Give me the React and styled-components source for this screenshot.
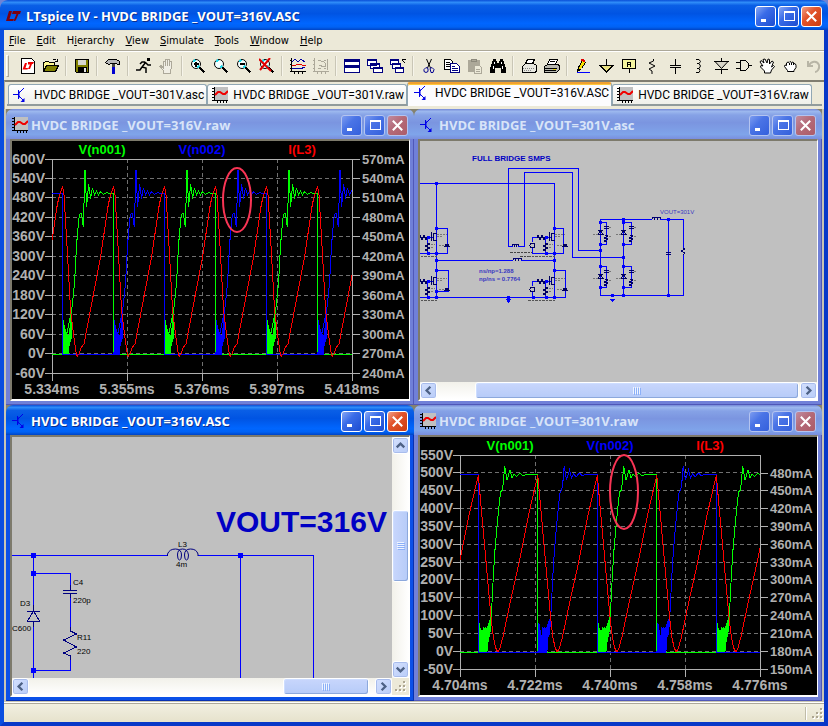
import React from "react";
import styled, { createGlobalStyle, css } from "styled-components";

const GlobalStyle = createGlobalStyle`
  * { box-sizing: border-box; }
  html, body { margin: 0; height: 100%; }
  body { background: #6d83d6; font-family: "DejaVu Sans Condensed", "Noto Sans", sans-serif; }
  #root { height: 100%; }
  button { margin: 0; padding: 0; border: 0; background: none; font: inherit; color: inherit; }
`;

const activeBar = "linear-gradient(#0a4fd8 0%, #2f8cf8 8%, #0a5fe6 18%, #0054e3 45%, #0066ff 78%, #0062f4 90%, #0044c4 100%)";
const inactiveBar = "linear-gradient(#7488d8 0%, #9cb8ee 8%, #86a2e6 20%, #7b95e0 45%, #7fa4ea 85%, #7a8ede 100%)";

const Frame = styled.div`
  display: flex;
  flex-direction: column;
  width: 100%;
  height: 100vh;
  min-height: 480px;
  border-radius: 8px 8px 0 0;
  overflow: hidden;
`;

const FrameBody = styled.div`
  display: flex;
  flex: 1;
  flex-direction: column;
  min-height: 0;
  background: #ece9d8;
  border: solid;
  border-width: 0 4px 4px;
  border-color: #0a4ee0 #0838c8 #0838c8 #0a4ee0;
`;

const TitleBar = styled.header`
  display: flex;
  align-items: center;
  flex: none;
  height: 30px;
  gap: ${(p) => (p.$main ? 5 : 3)}px;
  padding: 2px 6px 0;
  background: ${(p) => (p.$active ? activeBar : inactiveBar)};
  border-radius: 7px 7px 0 0;
`;

const TitleText = styled.h2`
  flex: 1;
  min-width: 0;
  margin: 0;
  overflow: hidden;
  white-space: nowrap;
  font: bold 13px/20px "Open Sans", "Noto Sans", sans-serif;
  color: ${(p) => (p.$active ? "#fff" : "#d8e4f8")};
  text-shadow: ${(p) => (p.$active ? "1px 1px 0 #0a3090" : "none")};
`;

const Controls = styled.div`
  display: flex;
  gap: 2px;
`;

const ControlButton = styled.button`
  display: grid;
  place-items: center;
  width: 21px;
  height: 21px;
  border: 1px solid ${(p) => (p.$active ? "#fff" : "#b4c4f0")};
  border-radius: 3px;
  background: ${(p) =>
    p.$close
      ? p.$active
        ? "linear-gradient(135deg, #f0a088, #e2542c 40%, #cc3c10)"
        : "linear-gradient(135deg, #c08ca0, #b46a78 45%, #ac5c68)"
      : p.$active
        ? "linear-gradient(135deg, #88a8f4, #3a6ce8 40%, #1c4cd0)"
        : "linear-gradient(135deg, #7c9cf0, #4a74e6 40%, #3460dc)"};
`;

const Menu = styled.nav`
  display: flex;
  flex: none;
  align-items: center;
  height: 20px;
  padding: 2px 0 0 5px;
  gap: 11px;
  font-size: 11px;
  line-height: 16px;
  color: #000;
`;

const Toolbar = styled.div`
  display: flex;
  flex: none;
  align-items: center;
  height: 30px;
  overflow: hidden;
  border-top: 1px solid #aca899;
  box-shadow: inset 0 1px 0 #fff;
`;

const Grip = styled.span`
  flex: none;
  width: 3px;
  height: 22px;
  margin: 0 7px 0 2px;
  border: 1px solid #aca899;
  border-color: #fff #aca899 #aca899 #fff;
`;

const ToolButton = styled.button`
  display: grid;
  place-items: center;
  flex: none;
  width: 23px;
  height: 22px;
`;

const Divider = styled.span`
  flex: none;
  width: 2px;
  height: 20px;
  margin: 0 3px;
  background: #c9c6b6;
  border-right: 1px solid #f6f4ea;
`;

const TabStrip = styled.div`
  display: flex;
  flex: none;
  align-items: flex-end;
  height: 29px;
  padding: 0 2px 3px;
  border-top: 2px solid #807d70;
  border-left: 1px solid #aca899;
`;

const TabRow = styled.div`
  display: flex;
  flex: 1;
  min-width: 0;
  align-items: flex-end;
  height: 24px;
  border-bottom: 2px solid #919b9c;
  padding-left: 1px;
`;

const Tab = styled.button`
  display: flex;
  align-items: center;
  gap: 5px;
  height: ${(p) => (p.$active ? 24 : 20)}px;
  padding: ${(p) => (p.$active ? "0 2px 4px 6px" : "0 2px 0 4px")};
  margin-bottom: ${(p) => (p.$active ? -2 : 0)}px;
  white-space: nowrap;
  font: 12px/16px Roboto, "DejaVu Sans Condensed", sans-serif;
  color: #000;
  border: 1px solid #91a7b4;
  border-bottom: 0;
  border-radius: 3px 3px 0 0;
  background: linear-gradient(#fff, #f0f0ea);
  svg { flex: none; }
  ${(p) =>
    p.$active &&
    css`
      background: #fcfcfe;
      border-top: 2px solid #f0a030;
      box-shadow: inset 0 1px 0 #ffc83c;
    `}
`;

const Workspace = styled.main`
  display: grid;
  flex: 1;
  min-height: 0;
  grid-template: 1fr 1fr / 1fr 1fr;
  background: #84826f;
  border: solid #c8c5b4;
  border-width: 0 2px 1px;
`;

const Child = styled.section`
  display: flex;
  flex-direction: column;
  min-width: 0;
  min-height: 0;
`;

const ChildBody = styled.div`
  display: flex;
  flex: 1;
  flex-direction: column;
  min-height: 0;
  padding: 0 4px 4px;
  background: ${(p) => (p.$active ? "#0a50e8" : "#7080d8")};
  box-shadow: inset -1px -1px 0 ${(p) => (p.$active ? "#0830b0" : "#5058b8")};
`;

const Client = styled.div`
  display: grid;
  flex: 1;
  min-height: 0;
  grid-template: ${(p) => (p.$vertical ? "minmax(0, 1fr) auto / minmax(0, 1fr) auto" : "minmax(0, 1fr) auto / minmax(0, 1fr)")};
  border: solid;
  border-width: 2px 1px 2px 2px;
  border-color: #7d7a6c #fff #fff #7d7a6c;
  background: ${(p) => p.$fill};
`;

const Sheet = styled.div`
  overflow: hidden;
  min-width: 0;
  min-height: 0;
  background: #c0c0c0;
  svg { display: block; }
`;

const PlotSvg = styled.svg`
  display: block;
  width: 100%;
  height: 100%;
  min-height: 0;
`;

const Track = styled.div`
  display: flex;
  flex-direction: ${(p) => (p.$vertical ? "column" : "row")};
  background: linear-gradient(${(p) => (p.$vertical ? "90deg" : "180deg")}, #f2f1ea, #fff);
`;

const ScrollButton = styled.button`
  display: grid;
  place-items: center;
  flex: none;
  width: 17px;
  height: 17px;
  border: 1px solid #fff;
  border-radius: 3px;
  background: linear-gradient(135deg, #d4e0fe, #b8ccf8);
  box-shadow: inset 0 0 0 1px #a8bcec;
`;

const Spacer = styled.span`
  flex: ${(p) => p.$grow} 1 0;
`;

const Thumb = styled.span`
  display: grid;
  place-items: center;
  flex: ${(p) => p.$grow} 1 0;
  min-width: 17px;
  min-height: 17px;
  border: 1px solid #fff;
  border-radius: 3px;
  background: linear-gradient(${(p) => (p.$vertical ? "90deg" : "180deg")}, #c8d6fc, #b6cbf8);
  box-shadow: inset -1px -1px 0 #8ca8dc, inset 1px 1px 0 #cdddff;
`;

const StatusBar = styled.footer`
  display: flex;
  flex: none;
  align-items: center;
  justify-content: flex-end;
  gap: 5px;
  height: 20px;
  padding: 2px 0 0;
  border-top: 1px solid #fff;
  box-shadow: inset 0 1px 0 #aca899;
  background: linear-gradient(#f2f0e2, #e6e2cc);
`;

const StatusDivider = styled.span`
  width: 2px;
  height: 13px;
  border-left: 1px solid #c0bca8;
  border-right: 1px solid #fff;
`;

const CornerBox = styled.span`
  display: grid;
  place-items: end;
  padding: 2px;
  background: #ece9d8;
`;

/* ---------- icons ---------- */

const Svg16 = ({ children, size = 16, ...rest }) => (
  <svg width={size} height={size} viewBox="0 0 16 16" fill="none" stroke="#000" shapeRendering="crispEdges" aria-hidden="true" {...rest}>
    {children}
  </svg>
);

const Gripper = () => (
  <svg width="12" height="12" viewBox="0 0 12 12" aria-hidden="true" shapeRendering="crispEdges">
    <path d="M9 1h2v2h-2zM5 5h2v2h-2zM9 5h2v2h-2zM1 9h2v2h-2zM5 9h2v2h-2zM9 9h2v2h-2z" fill="#fff" />
    <path d="M8 0h2v2h-2zM4 4h2v2h-2zM8 4h2v2h-2zM0 8h2v2h-2zM4 8h2v2h-2zM8 8h2v2h-2z" fill="#aca590" />
  </svg>
);

const AppLogo = () => (
  <svg width="15" height="12" viewBox="0 0 15 12" fill="#7c0010" aria-hidden="true">
    <path d="M3 1h3L3.500 9H8l-1 2H0z" />
    <path d="M7 1h8l-1 3h-1.500l-2.500 6c-.5 1-1.500 1-2.500 1l3-7H6z" />
  </svg>
);

const SchematicIcon = () => (
  <Svg16 stroke="#0000e8" shapeRendering="auto">
    <path d="M0 7.500h5M5.500 3v9M6 6l5-5M6 9l5 5" />
    <path d="M6 4v7" />
    <path d="M11.500 11v4h-4z" fill="#0000e8" stroke="none" />
  </Svg16>
);

const WaveIcon = () => (
  <Svg16>
    <path d="M2 0h14v13H2z" fill="#c0c0c0" stroke="none" />
    <path d="M2.500 0v14M2 13.500h14M0 1.500h2M0 4.500h2M0 7.500h2M0 10.500h2M0 13.500h2M5.500 14v2M8.500 14v2M11.500 14v2M14.500 14v2" />
    <path d="M3 8l3-3 2 0 3 2 2 0 3-3" stroke="#f00000" strokeWidth="2" shapeRendering="auto" />
  </Svg16>
);

const Lens = ({ children }) => (
  <>
    <circle cx="6" cy="6" r="4.500" fill="#f4ffff" shapeRendering="auto" />
    <path d="M3 4l2-2M7 10l2-2" stroke="#20d8e8" strokeWidth="2" />
    <path d="M9.500 9.500l5 5" strokeWidth="2" />
    {children}
  </>
);

const hand = "M4 15v-3L1 8.500 2 7.500l2 2V3h2v5V1h2v7V1.500h2V8V3h2v8l-1 2v2z";

const icons = {
  new: (
    <>
      <path d="M1.500.5h10l3 3v12h-13z" fill="#fff" />
      <path d="M5 5h2L5.500 10H8l-.5 1.500H2.500zM8 4h6l-1 2h-1l-2 5H8l2-4.500H8z" fill="#f00000" stroke="none" shapeRendering="auto" />
    </>
  ),
  open: (
    <>
      <path d="M.5 13.500v-9h1l1-1h3l1 1h5v3" fill="#fff890" />
      <path d="M.5 13.500l3-6h12l-3 6z" fill="#808000" />
      <path d="M9.500 2.500q2-2 4 0M14.500.5v3h-3" />
    </>
  ),
  save: (
    <>
      <path d="M1.500 1.500h13v13h-12l-1-1z" fill="#808000" />
      <path d="M4 2h8v5H4z" fill="#d8d8d0" stroke="none" />
      <path d="M4 9h9v6H4z" fill="#000" stroke="none" />
      <path d="M10 10h2v4h-2z" fill="#e8e8e8" stroke="none" />
    </>
  ),
  hammer: (
    <>
      <path d="M.5 4.500l3-3h8l3 2v3h-2l-1-1h-5l-3 1z" fill="#b8b8b8" />
      <path d="M7 6h3v4H7z" fill="#444" stroke="none" />
      <path d="M7 9h3v7H7z" fill="#0000d0" stroke="none" />
    </>
  ),
  run: (
    <>
      <path d="M11 0h3v3h-3z" fill="#000" stroke="none" />
      <path d="M10 4L6 9M9 4H6L4 6M10 5l2 2h3" strokeWidth="1.500" shapeRendering="auto" />
      <path d="M6 9l4 1 0 5M6 9l-2 3H0" strokeWidth="1.500" shapeRendering="auto" />
    </>
  ),
  halt: <path d={hand} fill="#f0eee4" stroke="#aca899" />,
  zoomIn: <Lens><path d="M3.500 6h5M6 3.500v5" strokeWidth="1.500" /></Lens>,
  zoom: <Lens />,
  zoomOut: <Lens><path d="M3.500 6h5" strokeWidth="2" /></Lens>,
  zoomFit: <Lens><path d="M0 1l12 12M11 0L1 12" stroke="#e00000" strokeWidth="2" shapeRendering="auto" /></Lens>,
  autorange: (
    <>
      <path d="M1.500 0v14M0 13.500h16M0 2.500h2M0 6.500h2M0 10.500h2M4.500 13v3M8.500 13v3M12.500 13v3" />
      <path d="M2 4l3-3 3 3 3-3 4 3" stroke="#0000a0" />
      <path d="M2 7h4l3-1 3 1h4" stroke="#e00000" />
      <path d="M2 11l4-1 4 1 5-2" stroke="#0000a0" />
    </>
  ),
  setup: (
    <>
      <path d="M1.500 0v14M0 13.500h16M0 2.500h2M0 6.500h2M0 10.500h2M4.500 13v3M8.500 13v3M12.500 13v3" stroke="#aca899" />
      <path d="M5 2.500h3M11 2.500h2M5 10.500h3M11 10.500h2M8.500 4a3 3 0 0 1 4 4l-4 1V7H6M14.500 1v11" stroke="#aca899" />
    </>
  ),
  tile: (
    <>
      <path d="M.5 1.500h15v6H.5zM.5 8.500h15v6H.5z" fill="#fff" stroke="#000080" />
      <path d="M1 3h14M1 9h14" stroke="#000080" strokeWidth="2" />
    </>
  ),
  cascade: (
    <g fill="#fff" stroke="#000080">
      <path d="M.5 1.500h9v6h-9zM3.500 5.500h9v5h-9zM6.500 9.500h9v5h-9z" />
      <path d="M1 2h9M4 6h9M7 10h9" strokeWidth="2" />
    </g>
  ),
  closeAll: (
    <>
      <g fill="#fff" stroke="#000080">
        <path d="M.5 1.500h8v5h-8zM2.500 5.500h8v5h-8zM5.500 9.500h8v5h-8z" />
        <path d="M1 2h8M3 6h8M6 10h8" strokeWidth="2" />
      </g>
      <path d="M15 5l-3-3M12 1.500h3.500" />
    </>
  ),
  cut: (
    <g shapeRendering="auto">
      <path d="M5.500 1l4 9M10.500 1l-4 9" />
      <path d="M3 11.500l2-2 2 1v3l-2 1-2-1zM9 10.500l2-1 2 2-1 3h-2z" stroke="#000090" />
    </g>
  ),
  copy: (
    <>
      <path d="M.5 1.500h6l2 2v8h-8z" fill="#fff" />
      <path d="M2 4.500h4M2 6.500h5M2 8.500h5" />
      <path d="M6.500 5.500h6l3 3v6h-9z" fill="#fff" stroke="#000080" />
      <path d="M8 8.500h3M8 10.500h6M8 12.500h6" stroke="#000080" />
    </>
  ),
  paste: (
    <>
      <path d="M1 2h12v12H1z" fill="#aca899" stroke="none" />
      <path d="M4.500 1.500h5v2h-5z" stroke="#8c897c" />
      <path d="M7.500 7.500h5l2 2v6h-7z" fill="#ece9d8" stroke="#aca899" />
      <path d="M9 11.500h4M9 13.500h4" stroke="#aca899" />
    </>
  ),
  find: (
    <>
      <path d="M3 1h3l1 4h2l1-4h3l3 10v4h-5v-5H5v5H0v-4z" fill="#000" stroke="none" />
      <path d="M4.500 4v2M3.500 8v3M11.500 4v2M12.500 8v3" stroke="#fff" />
    </>
  ),
  preview: (
    <>
      <path d="M4.500 5.500l2-4h7l-2 4z" fill="#fff" />
      <path d="M1.500 8.500l3-3h8l3 2v6l-2 1h-12z" fill="#e8e8e0" />
      <path d="M2 10.500h11M3 12.500h8" stroke="#888" strokeDasharray="1 1" />
    </>
  ),
  print: (
    <>
      <path d="M3.500 6.500l2-5h8l-2 5z" fill="#fff" />
      <path d="M.5 8.500l3-2h10l2 1v4l-3 3H.5z" fill="#b8b8b0" />
      <path d="M1 10.500h12M1 12.500h11M6 3.500h5" />
      <path d="M9 11h3v1H9z" fill="#e0d000" stroke="none" />
    </>
  ),
  wire: (
    <>
      <path d="M2.500 13.500l1-4 4-7 3 2-4 6z" fill="#f8e000" />
      <path d="M6 1h3v1h1v2H8V3H6z" fill="#e00000" stroke="none" />
      <path d="M2 14.500h13" stroke="#0000ff" />
    </>
  ),
  ground: <path d="M8.500 1v6M1 7.500h15M2.500 8l6 6 6-6" fill="#e8e080" />,
  label: (
    <>
      <path d="M1.500 1.500h13v9h-13z" fill="#f4f4a0" />
      <path d="M6.500 9V4.500h3V9M6 6.500h4M8.500 11v4" />
    </>
  ),
  resistor: <path d="M9.500 1v2L5 5l6 3-6 3 3 2v3" shapeRendering="auto" />,
  capacitor: <path d="M3 7.500h11M3 9.500h11M8.500 1v6M8.500 10v6" />,
  inductor: <path d="M6 1.500h3l1.500 2-1.500 2H7h2l1.500 2.500L9 10.500H7h2l1 2-1 2H6" shapeRendering="auto" />,
  diode: (
    <>
      <path d="M2 3.500h13l-6.500 7z" fill="#d8d5c8" shapeRendering="auto" />
      <path d="M8.500 0v3M1 3.500h15M2 11.500h13M8.500 12v4" />
    </>
  ),
  component: <path d="M4.500 2.500h4q4 1 4.500 5-.5 4-4.500 5h-4zM0 4.500h4M0 10.500h4M13 7.500h3" />,
  move: <path d="M5.500 15v-2L1.500 9 2 7.500l2 .5-3-4 1-1.500L5 5 4 1.500 6 1l2 4 1-4 1.500.5L10.500 6 13 3l1.500 1L12.500 9l2 -1.500 1 1L12.500 12l-1 3z" fill="#fff" shapeRendering="auto" />,
  drag: (
    <>
      <path d="M5.500 13.500v-1l-3-4 .5-1.500 1.500.5V5L6 4l1 .5L8 3.500l1.500 1L11 4l1 1.500 1.500.5.5 1.500v2l-2 3v1z" fill="#fff" shapeRendering="auto" />
      <path d="M7.500 5v2M9.500 5v2M11.500 5v2" />
    </>
  ),
  undo: <path d="M3 3v5h5M3.500 8C6 3 12 2 14 7c1 4-2 7-4 7" stroke="#b8b5a6" strokeWidth="2" shapeRendering="auto" />,
};

const toolGroups = [
  [["New schematic", "new"], ["Open", "open"]],
  [["Save", "save"]],
  [["Control panel", "hammer"]],
  [["Run", "run"], ["Halt", "halt"]],
  [["Zoom in", "zoomIn"], ["Zoom area", "zoom"], ["Zoom out", "zoomOut"], ["Zoom to fit", "zoomFit"]],
  [["Autorange", "autorange"], ["Plot setup", "setup"]],
  [["Tile windows", "tile"], ["Cascade windows", "cascade"], ["Close all windows", "closeAll"]],
  [["Cut", "cut"], ["Copy", "copy"], ["Paste", "paste"], ["Find", "find"]],
  [["Print preview", "preview"], ["Print", "print"]],
  [
    ["Draw wire", "wire"], ["Place ground", "ground"], ["Label net", "label"], ["Resistor", "resistor"],
    ["Capacitor", "capacitor"], ["Inductor", "inductor"], ["Diode", "diode"], ["Component", "component"],
    ["Move", "move"], ["Drag", "drag"], ["Undo", "undo"],
  ],
];

/* ---------- window parts ---------- */

const WindowControls = ({ active }) => (
  <Controls>
    <ControlButton type="button" aria-label="Minimize" $active={active}>
      <Svg16 size={15}><path d="M3 11h6v3H3z" fill="#fff" stroke="none" /></Svg16>
    </ControlButton>
    <ControlButton type="button" aria-label="Maximize" $active={active}>
      <Svg16><path d="M3.500 3.500h10v9h-10z" stroke="#fff" /><path d="M3 4h11" stroke="#fff" strokeWidth="2" /></Svg16>
    </ControlButton>
    <ControlButton type="button" aria-label="Close" $active={active} $close>
      <Svg16 size={15} shapeRendering="auto"><path d="M3 3l10 10M13 3L3 13" stroke="#fff" strokeWidth="2.200" /></Svg16>
    </ControlButton>
  </Controls>
);

const arrows = { left: "M10 4L6 8l4 4", right: "M6 4l4 4-4 4", up: "M4 10l4-4 4 4", down: "M4 6l4 4 4-4" };

const Arrow = ({ dir }) => (
  <ScrollButton type="button" aria-label={`Scroll ${dir}`}>
    <Svg16 size={15} shapeRendering="auto"><path d={arrows[dir]} stroke="#4d6185" strokeWidth="2.500" /></Svg16>
  </ScrollButton>
);

const ScrollBar = ({ vertical, before, size, after }) => (
  <Track $vertical={vertical}>
    <Arrow dir={vertical ? "up" : "left"} />
    <Spacer $grow={before} />
    <Thumb $grow={size} $vertical={vertical}>
      <svg width="8" height="8" shapeRendering="crispEdges" aria-hidden="true">
        <path d={vertical ? "M0 .5h7M0 2.500h7M0 4.500h7M0 6.500h7" : "M.5 0v7M2.500 0v7M4.500 0v7M6.500 0v7"} stroke="#eef4ff" />
        <path d={vertical ? "M1 1.500h7M1 3.500h7M1 5.500h7M1 7.500h7" : "M1.500 1v7M3.500 1v7M5.500 1v7M7.500 1v7"} stroke="#8cb0f8" />
      </svg>
    </Thumb>
    <Spacer $grow={after} />
    <Arrow dir={vertical ? "down" : "right"} />
  </Track>
);

const ChildWindow = ({ title, icon, active, vertical, fill, children }) => (
  <Child aria-label={title}>
    <TitleBar $active={active}>
      {icon}
      <TitleText $active={active}>{title}</TitleText>
      <WindowControls active={active} />
    </TitleBar>
    <ChildBody $active={active}>
      <Client $vertical={vertical} $fill={fill}>{children}</Client>
    </ChildBody>
  </Child>
);

/* ---------- waveform plots ---------- */

const LEFT = 40, RIGHT = 340, TOP = 18, BOTTOM = 232;

const plotA = {
  first: 50.6, period: 51, zero: 213, high: 52.5,
  rise: [[8.5, 172], [9.7, 164], [12, 141], [13.4, 114], [14.7, 94], [16.4, 77], [17.4, 72.6], [18.7, 72.6], [20.7, 86], [22.4, 29], [24, 66], [26, 43], [28, 57.6], [29.7, 47], [32, 54], [34, 50], [36, 54], [38, 50.5], [41, 53.5], [44, 51.5], [47, 52.5]],
  burst: "0.5,213 0.5,179 1.5,184 2,188 3,188 4,195 5,194 6,198 6.5,193 7.5,186 8.5,172 8.5,198 6.5,203 6,213",
  current: [[0, 45], [1.4, 53.6], [5, 115], [8, 170], [11.4, 197], [13.7, 213], [14.7, 215], [16.4, 213], [18.4, 207], [21.4, 203], [38, 115.6], [45.7, 63.6], [47.7, 55]],
  left: ["600V", "540V", "480V", "420V", "360V", "300V", "240V", "180V", "120V", "60V", "0V", "-60V"],
  right: ["570mA", "540mA", "510mA", "480mA", "450mA", "420mA", "390mA", "360mA", "330mA", "300mA", "270mA", "240mA"],
  rightStart: TOP,
  times: ["5.334ms", "5.355ms", "5.376ms", "5.397ms", "5.418ms"],
  mark: [225, 59, 14, 32],
};

const plotB = {
  first: 58.3, period: 59.5, zero: 215, high: 37.5,
  rise: [[13, 179.7], [15, 139.7], [16.5, 115], [19, 86], [21, 66], [22.4, 54.7], [24, 53], [25, 46], [26.4, 28.7], [28.7, 43], [31.7, 33], [33.7, 40.7], [35.7, 37], [38.4, 39.7], [41.5, 36], [45, 39], [48, 37], [51, 38], [54, 37]],
  burst: "0.5,215 0.5,186 1.5,188 2,195 3,193 3.5,205 4,200 5,191 6,192 6.5,197 7,190 8,195 9,194 10,190 11,188 12,183 13,179 12,193 11,200 10,195 9.5,212 8.5,215",
  current: [[0, 38.3], [7.4, 121], [12.7, 179.7], [15, 199.7], [17.4, 211], [19, 214], [20, 214], [21.7, 211], [24.7, 199.7], [32.4, 163], [40.7, 126], [50.7, 76]],
  left: ["550V", "500V", "450V", "400V", "350V", "300V", "250V", "200V", "150V", "100V", "50V", "0V", "-50V"],
  right: ["480mA", "450mA", "420mA", "390mA", "360mA", "330mA", "300mA", "270mA", "240mA", "210mA", "180mA", "150mA"],
  rightStart: TOP + 18,
  times: ["4.704ms", "4.722ms", "4.740ms", "4.758ms", "4.776ms"],
  mark: [204, 55, 14, 37],
};

const range = (n) => Array.from({ length: n }, (_, i) => i);
const spread = (from, to, n) => range(n).map((i) => Math.floor(from + ((to - from) * i) / (n - 1)) + 0.5);
const at = (x, pts) => pts.map(([dx, y]) => `${x + dx},${y}`);

const voltage = (d, phase) => {
  const pts = phase ? [`${LEFT},${d.high}`] : [`${LEFT},${d.zero}`];
  range(7).forEach((i) => {
    const x = d.first + i * d.period;
    if (i % 2 === phase) pts.push(`${x},${d.zero}`, ...at(x, d.rise));
    else if (i || phase) pts.push(`${x},${d.high}`, `${x},${d.zero}`);
  });
  return pts.join(" ");
};

const current = (d) => range(8).flatMap((i) => at(d.first + (i - 1) * d.period, d.current)).join(" ");

const PlotText = styled.text`
  font: bold ${(p) => p.$size}px "Liberation Sans", Arial, sans-serif;
  fill: ${(p) => p.$color || "#b0b0b0"};
  text-anchor: ${(p) => p.$anchor || "middle"};
`;

const Plot = ({ data, id }) => {
  const ys = spread(TOP, BOTTOM, data.left.length);
  const rs = spread(data.rightStart, BOTTOM, data.right.length);
  const xs = spread(LEFT, RIGHT, 5);
  return (
    <PlotSvg viewBox="0 0 397 258" role="img" aria-label="Waveforms">
      <clipPath id={id}><rect x={LEFT} y={TOP} width={RIGHT - LEFT} height={BOTTOM - TOP} /></clipPath>
      <g fill="none" shapeRendering="crispEdges">
        <g stroke="#707070" strokeDasharray="4 3">
          {ys.slice(1, -1).map((y) => <path key={y} d={`M${LEFT} ${y}H${RIGHT}`} />)}
          {xs.slice(1, -1).map((x) => <path key={x} d={`M${x} ${TOP}V${BOTTOM}`} />)}
        </g>
        <path d={`M${LEFT + 0.5} ${TOP + 0.5}H${RIGHT + 0.5}V${BOTTOM + 0.5}H${LEFT + 0.5}Z`} stroke="#b0b0b0" />
        <g stroke="#b0b0b0">
          {ys.map((y) => <path key={y} d={`M${LEFT - 7} ${y}h7`} />)}
          {rs.map((y) => <path key={y} d={`M${RIGHT} ${y}h8`} />)}
          {xs.map((x) => <path key={x} d={`M${x} ${BOTTOM}v8`} />)}
        </g>
        <g clipPath={`url(#${id})`}>
          {[0, 1].map((phase) => {
            const color = phase ? "#0000ff" : "#00ff00";
            return (
              <g key={phase} stroke={color}>
                <polyline points={voltage(data, phase)} />
                {range(6).filter((i) => i % 2 === phase).map((i) => (
                  <polygon key={i} points={data.burst} fill={color} transform={`translate(${data.first + i * data.period} 0)`} />
                ))}
              </g>
            );
          })}
          <polyline points={current(data)} stroke="#ff0000" />
        </g>
      </g>
      <ellipse cx={data.mark[0]} cy={data.mark[1]} rx={data.mark[2]} ry={data.mark[3]} fill="none" stroke="#f83454" strokeWidth="2" />
      {data.left.map((t, i) => <PlotText key={t} x="33" y={Math.round(ys[i] + 4)} $size={14} $anchor="end">{t}</PlotText>)}
      {data.right.map((t, i) => <PlotText key={t} x="350" y={Math.round(rs[i] + 4)} $size={13} $anchor="start">{t}</PlotText>)}
      {data.times.map((t, i) => <PlotText key={t} x={LEFT + 75 * i} y={BOTTOM + 21} $size={14}>{t}</PlotText>)}
      <PlotText x={LEFT + 50} y="13" $size={13} $color="#00ff00">V(n001)</PlotText>
      <PlotText x={LEFT + 150} y="13" $size={13} $color="#0000ff">V(n002)</PlotText>
      <PlotText x={LEFT + 250} y="13" $size={13} $color="#ff0000">I(L3)</PlotText>
    </PlotSvg>
  );
};

/* ---------- schematics ---------- */

const Note = styled.text`
  font: ${(p) => (p.$bold ? "bold " : "")}${(p) => p.$size}px "Liberation Sans", Arial, sans-serif;
  fill: ${(p) => (p.$part ? "#000" : p.$soft ? "#3838c0" : "#0000c4")};
`;

const Nodes = ({ points, size }) => (
  <g fill="#0000ff" stroke="none">
    {points.map(([x, y]) => <rect key={`${x}-${y}`} x={x - Math.floor(size / 2)} y={y - Math.floor(size / 2)} width={size} height={size} />)}
  </g>
);

const OutputStage = () => (
  <svg width="379" height="241" fill="none" stroke="#0000ff" role="img" aria-label="Output filter schematic">
    <g shapeRendering="crispEdges">
      <path d="M0 118.500h155M186 118.500h115.500V241M228.500 118v123M21.500 118v56M21.500 184v57M21 136.500h37.500V152M58.500 158v36M58.500 219v14.500H21" />
      <g stroke="#000080">
        <path d="M58.500 148v5M51 153.500h14M51 156.500h14M58.500 157v4" />
        <path d="M58.500 190v4l6 3-13 6 13 7-13 6 7 3v4" />
        <path d="M15 174.500h13M21.500 168v6l-6 10h12l-6-10M21.500 184v6" />
      </g>
      <Nodes size={5} points={[[21, 118], [21, 136], [21, 233], [228, 118]]} />
    </g>
    <path d="M155.500 119v-2q2-5 8-5 6 0 6 6 0 5-2 5t-2-5q0-6 5-6t6 6q0 5-2 5t-2-5q0-6 6-6 6 0 7.500 5v2" stroke="#000080" />
    <g stroke="none">
      <Note $size={30} $bold x="204" y="95">VOUT=316V</Note>
      <Note $size={8} $part x="166" y="110">L3</Note>
      <Note $size={8} $part x="164" y="130">4m</Note>
      <Note $size={8} $part x="61" y="148">C4</Note>
      <Note $size={8} $part x="61" y="166">220p</Note>
      <Note $size={8} $part x="8" y="169">D3</Note>
      <Note $size={8} $part x="0" y="194">C600</Note>
      <Note $size={8} $part x="65" y="203">R11</Note>
      <Note $size={8} $part x="65" y="217">220</Note>
    </g>
  </svg>
);

const Snubber = ({ x, y, w, h }) => (
  <g transform={`translate(${x} ${y})`}>
    <path d={`M.5.5h${w}v${h}H.5`} />
    <g stroke="#000060">
      <path d={`M${w - 2} 4.500h5M${w - 2} 6.500h5M${w - 1} 13l3 1-4 2 4 1-4 2 3 1`} />
      <path d="M-2 8.500h5M-2 12l2.500-3 2.500 3z" />
    </g>
    <path d={`M-7 12.500h5M${w + 3} 5.500h3M${w + 3} 14.500h3`} stroke="#777" strokeDasharray="2 1" />
  </g>
);

const Switch = ({ x, y, source }) => (
  <g transform={`translate(${x} ${y})`}>
    <path d="M-3 9.500h-5M-8.500 9v16M-20 25.500h20" />
    <g stroke="#000060">
      <path d="M-2.500 5v8M-4.500 4v9M-2 5.500h3M-2 12.500h3M-17 9.500l1-2 2 4 2-4 2 4 1-2M-8.500 15l2 1-4 2 4 2-4 2 2 1" />
      {source && <circle cx="-21.500" cy="17.500" r="2.500" />}
      <path d="M9 16h4M9 18.500l2-2 2 2z" />
    </g>
    {source && <path d="M-21.500 14V9.500h4.500M-21.500 20v5.500h4" />}
    <path d="M1 6.500h10M1 8.500h5M-5 16.500h4M-5 19.500h3M3 17.500h5" stroke="#777" strokeDasharray="2 1" />
    <path d="M-26 28.500h28" stroke="#555" strokeDasharray="3 1 2 1" />
  </g>
);

const BridgeOverview = () => (
  <svg width="397" height="241" fill="none" stroke="#0000ff" role="img" aria-label="Full bridge schematic">
    <g shapeRendering="crispEdges">
      <path d="M0 42.500h134.500V156M16.500 42v114M16 87.500h11.500v25H0M16 119.500h77M101 119.500h33M16 129.500h12.500v21H16M0 156.500h145.500v-27H134M134 87.500h9.500v25H134" />
      <path d="M93 105.500h-4.500v-78h70v82H180M98 105.500h6.500v-74h48v85H203" />
      <path d="M180.500 78v76M180 78.500h52M240 78.500h23.500V107M263.500 113v41.500H180M203.500 78v76M248.500 78v76" />
      <g stroke="#000070">
        <path d="M92 105v-2h2v3-3h2v3-3h2v2M93 119v-2h2v3-3h3v3-3h3v2M232 78v-2h2v3-3h3v3-3h3v2M246 111.500h5M246 113.500h5M263 107l2 1-4 2 4 2-2 2" />
      </g>
      <path d="M90 111.500h22M100 115.500h10" stroke="#444" strokeDasharray="3 1 2 1" />
      <Switch x={16} y={87} />
      <Switch x={16} y={131} />
      <Switch x={134} y={87} source />
      <Switch x={134} y={131} source />
      <Snubber x={180} y={81} w={6} h={22} />
      <Snubber x={180} y={125} w={6} h={21} />
      <Snubber x={203} y={81} w={8} h={22} />
      <Snubber x={203} y={125} w={8} h={21} />
      <path d="M86 158h5l-2.500 3zM190 158h5l-2.500 2z" fill="#0000ff" />
      <Nodes
        size={3}
        points={[
          [16, 42], [16, 87], [16, 112], [16, 119], [16, 129], [16, 150], [16, 156], [8, 96], [8, 112], [8, 140], [8, 156],
          [134, 87], [134, 112], [134, 119], [134, 129], [134, 156], [126, 96], [126, 112], [126, 140], [126, 156], [113, 156], [88, 156],
          [180, 81], [180, 103], [180, 109], [180, 125], [180, 146], [203, 78], [203, 81], [203, 103], [203, 116], [203, 125],
          [203, 146], [203, 154], [248, 78], [248, 154], [192, 154],
        ]}
      />
    </g>
    <g stroke="none">
      <Note $size={8} $bold x="52" y="20">FULL BRIDGE SMPS</Note>
      <Note $size={6} $bold $soft x="59" y="132">ns/np=1.288</Note>
      <Note $size={6} $bold $soft x="59" y="140">np/ns = 0.7764</Note>
      <Note $size={6} $soft x="240" y="73">VOUT=301V</Note>
    </g>
  </svg>
);

/* ---------- application ---------- */

const menus = ["File", "Edit", "Hierarchy", "View", "Simulate", "Tools", "Window", "Help"];
const accessKeys = { Hierarchy: 1 };

const tabs = [
  { title: "HVDC BRIDGE _VOUT=301V.asc", icon: <SchematicIcon /> },
  { title: "HVDC BRIDGE _VOUT=301V.raw", icon: <WaveIcon /> },
  { title: "HVDC BRIDGE _VOUT=316V.ASC", icon: <SchematicIcon />, active: true },
  { title: "HVDC BRIDGE _VOUT=316V.raw", icon: <WaveIcon /> },
];

export default function App() {
  return (
    <>
      <GlobalStyle />
      <Frame>
        <TitleBar $main $active>
          <AppLogo />
          <TitleText as="h1" $active>LTspice IV - HVDC BRIDGE _VOUT=316V.ASC</TitleText>
          <WindowControls active />
        </TitleBar>
        <FrameBody>
          <Menu>
            {menus.map((m) => {
              const k = accessKeys[m] || 0;
              return <button type="button" key={m}>{m.slice(0, k)}<u>{m[k]}</u>{m.slice(k + 1)}</button>;
            })}
          </Menu>
          <Toolbar role="toolbar">
            <Grip />
            {toolGroups.map((group, i) => (
              <React.Fragment key={group[0][0]}>
                {i > 0 && <Divider />}
                {group.map(([label, icon]) => (
                  <ToolButton type="button" key={label} aria-label={label}><Svg16>{icons[icon]}</Svg16></ToolButton>
                ))}
              </React.Fragment>
            ))}
          </Toolbar>
          <TabStrip>
            <TabRow role="tablist">
              {tabs.map((t) => (
                <Tab type="button" role="tab" key={t.title} $active={t.active} aria-selected={!!t.active}>{t.icon}{t.title}</Tab>
              ))}
            </TabRow>
          </TabStrip>
          <Workspace>
            <ChildWindow title="HVDC BRIDGE _VOUT=316V.raw" icon={<WaveIcon />} fill="#000">
              <Plot data={plotA} id="plot-316" />
            </ChildWindow>
            <ChildWindow title="HVDC BRIDGE _VOUT=301V.asc" icon={<SchematicIcon />} fill="#c0c0c0">
              <Sheet><BridgeOverview /></Sheet>
              <ScrollBar before={38} size={324} after={1} />
            </ChildWindow>
            <ChildWindow title="HVDC BRIDGE _VOUT=316V.ASC" icon={<SchematicIcon />} active vertical fill="#c0c0c0">
              <Sheet><OutputStage /></Sheet>
              <ScrollBar vertical before={57} size={70} after={80} />
              <ScrollBar before={255} size={84} after={6} />
              <CornerBox><Gripper /></CornerBox>
            </ChildWindow>
            <ChildWindow title="HVDC BRIDGE _VOUT=301V.raw" icon={<WaveIcon />} fill="#000">
              <Plot data={plotB} id="plot-301" />
            </ChildWindow>
          </Workspace>
          <StatusBar>
            <StatusDivider />
            <Gripper />
          </StatusBar>
        </FrameBody>
      </Frame>
    </>
  );
}
